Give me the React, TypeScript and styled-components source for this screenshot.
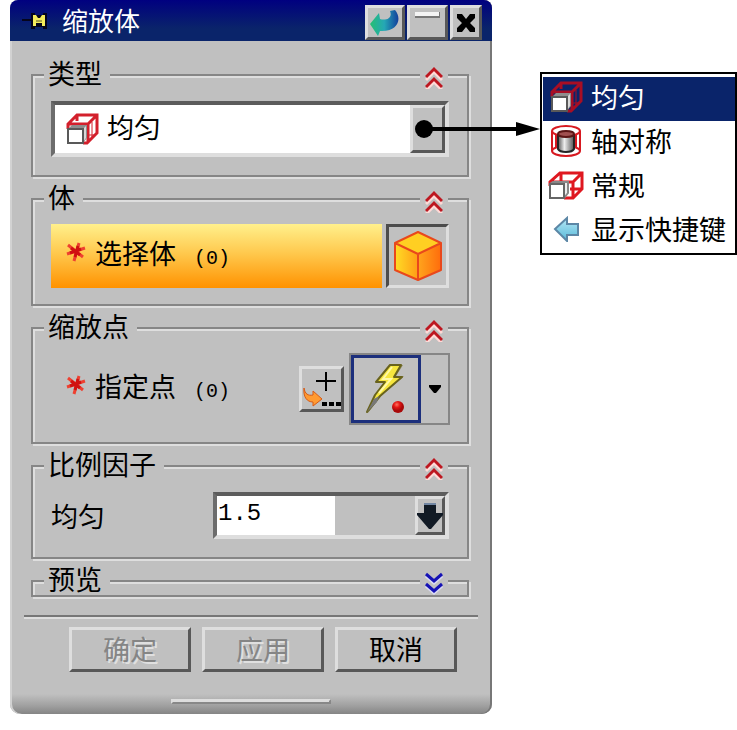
import React from "react";
import styled, { createGlobalStyle, css } from "styled-components";

const FACE = "#c0c0c0";
const LIGHT = "#dedede";
const SHADE = "#868686";
const NAVY = "#0a246a";

const GlobalStyle = createGlobalStyle`
  *, *::before, *::after { box-sizing: border-box; }
  body {
    margin: 0;
    background: #fff;
    color: #000;
    font-family: "Noto Sans CJK SC", sans-serif;
    font-size: 27px;
    line-height: 28px;
  }
  button, input {
    font: inherit;
    color: inherit;
    border-radius: 0;
    padding: 0;
    margin: 0;
  }
  svg { display: block; flex: none; }
`;

const raised = css`
  background: ${FACE};
  border: 3px solid;
  border-color: ${LIGHT} #585858 #585858 ${LIGHT};
`;

const Page = styled.main`
  display: flex;
  align-items: flex-start;
  gap: 48px;
  padding-left: 10px;
`;

const Dialog = styled.form`
  flex: 1 1 0;
  min-width: 420px;
  background: linear-gradient(to top, #858585 0, #a2a2a2 9px, ${FACE} 20px);
  border-radius: 8px 8px 10px 10px;
  box-shadow: inset 2px 0 0 #d2d2d2, inset -2px 0 0 #777;
`;

const TitleBar = styled.header`
  display: flex;
  align-items: center;
  height: 41px;
  padding: 0 10px 0 12px;
  border-radius: 8px 8px 0 0;
  background: linear-gradient(#000080, ${NAVY} 70%);
  color: #fff;
`;

const Title = styled.h1`
  flex: 1;
  margin: 0 0 2px 14px;
  font-size: 26px;
  font-weight: 400;
`;

const WindowButtons = styled.div`
  display: flex;
  gap: 2px;
  padding-top: 4px;
`;

const WindowButton = styled.button<{ $width: number }>`
  ${raised}
  display: flex;
  align-items: center;
  justify-content: center;
  width: ${(p) => p.$width}px;
  height: 35px;
`;

const Groups = styled.div`
  display: flex;
  flex-direction: column;
  gap: 8px;
  padding: 20px 23px 18px 21px;
`;

const GroupBox = styled.fieldset<{ $pad: string }>`
  position: relative;
  min-width: 0;
  margin: 0;
  padding: ${(p) => p.$pad};
  border: 2px solid ${SHADE};
  box-shadow: 2px 2px 0 ${LIGHT}, inset 2px 2px 0 ${LIGHT};
`;

const Legend = styled.legend`
  height: 28px;
  margin-left: -7px;
  padding: 0 8px 0 4px;
  background: ${FACE};
  line-height: 24px;
`;

const Toggle = styled.button`
  position: absolute;
  top: -23px;
  right: 19px;
  display: flex;
  justify-content: center;
  width: 28px;
  height: 23px;
  border: 0;
  background: ${FACE};
`;

const Row = styled.div`
  display: flex;
  align-items: center;
`;

const Field = styled.div<{ $height: number }>`
  display: flex;
  flex: 1;
  align-items: stretch;
  min-width: 0;
  height: ${(p) => p.$height}px;
  border: 4px solid;
  border-color: #5c5c5c ${LIGHT} ${LIGHT} #6c6c6c;
  background: #fff;
`;

const TypeIcon = styled.span`
  display: flex;
  align-items: center;
  padding: 0 8px 0 11px;
`;

const TypeInput = styled.input`
  flex: 1;
  min-width: 0;
  height: 42px;
  border: 0;
  background: transparent;
  outline: none;
`;

const DropButton = styled.button`
  ${raised}
  position: relative;
  width: 35px;
`;

const Connector = styled.svg`
  position: absolute;
  z-index: 2;
  top: 9px;
  left: 0;
  overflow: visible;
`;

const SelectBar = styled.div`
  display: flex;
  flex: 1;
  align-items: center;
  height: 64px;
  background: linear-gradient(#fff08c, #ffc94e 45%, #ff9200);
`;

const PromptBox = styled.div`
  display: flex;
  align-items: center;
  flex: 1;
  gap: 9px;
  padding-left: 15px;
`;

const MarkSlot = styled.span`
  padding-bottom: 8px;
`;

const Count = styled.span`
  margin-left: 18px;
  font-family: "Liberation Mono", monospace;
  font-size: 20px;
`;

const BodyButton = styled.button`
  display: flex;
  align-items: center;
  justify-content: center;
  width: 63px;
  height: 64px;
  margin-left: 4px;
  background: ${FACE};
  border: 3px solid;
  border-color: #4c4c4c ${LIGHT} ${LIGHT} #4c4c4c;
`;

const PointDialogButton = styled.button`
  ${raised}
  display: flex;
  width: 45px;
  height: 46px;
  margin-right: 5px;
`;

const SplitButton = styled.div`
  display: flex;
  height: 72px;
  border: 2px solid ${SHADE};
`;

const PointButton = styled.button`
  width: 70px;
  border: 3px solid #1c2f7c;
  background: ${FACE};
  display: flex;
  align-items: center;
  justify-content: center;
`;

const PointMenuButton = styled.button`
  width: 27px;
  border: 0;
  background: ${FACE};
  display: flex;
  align-items: center;
  justify-content: center;
`;

const FactorLabel = styled.label`
  width: 162px;
  line-height: 40px;
`;

const FactorField = styled(Field)`
  background: ${FACE};
`;

const FactorInput = styled.input`
  width: 118px;
  height: 39px;
  padding: 0 0 4px 1px;
  border: 0;
  background: #fff;
  font-family: "Liberation Mono", monospace;
  font-size: 24px;
  outline: none;
`;

const FactorButton = styled.button`
  ${raised}
  display: flex;
  align-items: center;
  justify-content: center;
  width: 30px;
  margin-left: auto;
`;

const Separator = styled.hr`
  height: 4px;
  margin: 0 14px 8px;
  border: 0;
  border-top: 2px solid #777;
  border-bottom: 2px solid ${LIGHT};
`;

const Actions = styled.div`
  display: flex;
  justify-content: center;
  gap: 11px;
  padding-left: 24px;
`;

const ActionButton = styled.button`
  ${raised}
  width: 122px;
  height: 45px;
  padding-bottom: 2px;

  &:disabled {
    color: #858585;
    text-shadow: 2px 2px 0 #e0e0e0;
  }
`;

const GripArea = styled.div`
  display: flex;
  justify-content: center;
  height: 42px;
  padding-top: 27px;
`;

const Grip = styled.div`
  width: 33%;
  height: 5px;
  border: 2px solid;
  border-color: #ddd #888 #888 #ddd;
  background: #ddd;
`;

const Menu = styled.ul`
  flex: none;
  width: 197px;
  margin: 72px 0 0;
  padding: 3px 0 0 1px;
  list-style: none;
  border: 2px solid #000;
  background: #fff;
`;

const MenuItem = styled.button<{ $active?: boolean }>`
  display: flex;
  align-items: center;
  width: 100%;
  height: 44px;
  padding: 0 0 4px 5px;
  gap: 7px;
  border: 0;
  background: ${(p) => (p.$active ? NAVY : "#fff")};
  color: ${(p) => (p.$active ? "#fff" : "#000")};
  white-space: nowrap;
`;

const IconSlot = styled.span`
  display: flex;
  flex: none;
  align-items: center;
  justify-content: center;
  width: 36px;
`;

const Pin = () => (
  <svg width="26" height="20" viewBox="0 0 26 20" aria-hidden="true">
    <path d="M0 9h9" stroke="#05051c" strokeWidth="2" />
    <path d="M9 2h4v2h8V2h4v16h-4v-2h-8v2H9z" fill="#05051c" />
    <path d="M11 4h3l2 3h2l2-3h3v11h-3v-3h-6v3h-3z" fill="#f4ec5c" />
    <path d="M14 9h6v2h-6z" fill="#a5a044" />
  </svg>
);

const ResetIcon = () => (
  <svg width="32" height="28" viewBox="0 0 32 28" aria-hidden="true">
    <defs>
      <linearGradient id="reset" x1="0" x2="1">
        <stop offset="0" stopColor="#26bf72" />
        <stop offset=".5" stopColor="#25a8b5" />
        <stop offset="1" stopColor="#123f9c" />
      </linearGradient>
    </defs>
    <path d="M1 15 10 4l1 6c6 2 13-1 10-8l5-1c7 8 4 22-15 21l-2 5z" fill="url(#reset)" />
  </svg>
);

const MinimizeIcon = () => (
  <svg width="30" height="28" viewBox="0 0 30 28" aria-hidden="true">
    <path d="M2 3h25v6H2z" fill="#777" />
    <path d="M2 3h24v4H2z" fill="#f4f4f4" />
  </svg>
);

const CloseIcon = () => (
  <svg width="22" height="22" viewBox="0 0 22 22" aria-hidden="true">
    <path d="M2 2h5l4 5 4-5h5v4l-5 5 5 5v4h-5l-4-5-4 5H2v-4l5-5-5-5z" />
  </svg>
);

const Chevrons = ({ down }: { down?: boolean }) => (
  <svg width="18" height="23" viewBox="0 0 18 23" fill="none" aria-hidden="true">
    {down ? (
      <>
        <path d="m1 4 8 7 8-7M1 14l8 7 8-7" stroke="#d9d9f2" strokeWidth="3" />
        <path d="m1 2 8 7 8-7M1 12l8 7 8-7" stroke="#1512b5" strokeWidth="3" />
      </>
    ) : (
      <>
        <path d="m1 14 8-8 8 8M1 24l8-8 8 8" stroke="#ffd9d6" strokeWidth="3" />
        <path d="m1 11 8-8 8 8M1 21l8-8 8 8" stroke="#bd1720" strokeWidth="3" />
      </>
    )}
  </svg>
);

const UniformIcon = ({ dark }: { dark?: boolean }) => {
  const red = dark ? "#a80e24" : "#d3202c";
  return (
    <svg width="33" height="32" viewBox="0 0 33 32" aria-hidden="true">
      <path d="M2 16v-5L11 2h20v18L21 30h-4M2 11h20v18M22 11l9-9M11 2v6" fill="none" stroke={red} strokeWidth="3" />
      <path d="M26 9v16M22 22h6" fill="none" stroke={red} strokeWidth="1" />
      <path d="m2 16 4-4h15v13l-4 5z" fill="#8e8e8e" />
      <path d="m17 16 3-3v12l-3 4z" fill="#d8d8d8" />
      <path d="M2 16h15v14H2z" fill="#fff" stroke="#595959" strokeWidth="2" />
    </svg>
  );
};

const AxisIcon = () => (
  <svg width="33" height="34" viewBox="0 0 33 34" aria-hidden="true">
    <defs>
      <linearGradient id="drum" x1="0" x2="1">
        <stop offset="0" stopColor="#555" />
        <stop offset=".4" stopColor="#eee" />
        <stop offset="1" stopColor="#555" />
      </linearGradient>
    </defs>
    <ellipse cx="16" cy="7" rx="14" ry="5" fill="none" stroke="#d71920" strokeWidth="2" />
    <ellipse cx="16" cy="27" rx="14" ry="5" fill="none" stroke="#d71920" strokeWidth="2" />
    <path d="M2 7v20M30 7v20M6 10v14M26 10v14" stroke="#d71920" strokeWidth="2" />
    <path d="M8 11v14c2 4 14 4 16 0V11z" fill="url(#drum)" stroke="#252525" strokeWidth="2" />
    <ellipse cx="16" cy="10" rx="8" ry="3" fill="#a05050" stroke="#5b1515" strokeWidth="2" />
  </svg>
);

const GeneralIcon = () => (
  <svg width="36" height="29" viewBox="0 0 36 29" fill="none" aria-hidden="true">
    <path d="M2 15v-4L12 2h22v16l-9 9h-9M2 11h23v16M25 11l9-9M13 2v8M22 18h12" stroke="#df1820" strokeWidth="3" />
    <path d="m2 13 3-2h15v11l-4 5" fill="#eee" stroke="#888" strokeWidth="2" />
    <path d="M2 13h14v14H2z" fill="#fff" stroke="#666" strokeWidth="2" />
  </svg>
);

const ArrowLeftIcon = () => (
  <svg width="27" height="26" viewBox="0 0 27 26" aria-hidden="true">
    <defs>
      <linearGradient id="left" x1="0" y1="0" x2="0" y2="1">
        <stop offset="0" stopColor="#b6e7f5" />
        <stop offset="1" stopColor="#56b9d9" />
      </linearGradient>
    </defs>
    <path d="M2 13 14 2v6h11v11H14v6z" fill="url(#left)" stroke="#5c87a6" strokeWidth="2" />
  </svg>
);

const RequiredMark = () => (
  <svg width="20" height="20" viewBox="0 0 20 20" role="img" aria-label="必填">
    <path d="m13 1-5 18M2 3l15 12M1 12l18-6" stroke="#ee4030" strokeWidth="3" />
    <path d="m12 4-3 11M5 6l9 7M4 11l11-4" stroke="#d01010" strokeWidth="3" />
  </svg>
);

const CubeIcon = () => (
  <svg width="50" height="52" viewBox="0 0 50 52" aria-hidden="true">
    <defs>
      <linearGradient id="side" x1="0" x2="1">
        <stop offset="0" stopColor="#ffdc25" />
        <stop offset="1" stopColor="#ff9d16" />
      </linearGradient>
      <linearGradient id="front" x1="0" x2="1">
        <stop offset="0" stopColor="#ffa51d" />
        <stop offset="1" stopColor="#ff6c0c" />
      </linearGradient>
    </defs>
    <path d="M25 2 48 13 25 24 2 13z" fill="#ffcf22" />
    <path d="m2 13 23 11v26L2 40z" fill="url(#side)" />
    <path d="m25 24 23-11v27L25 50z" fill="url(#front)" />
    <path d="M25 2 48 13v27L25 50 2 40V13zM2 13l23 11 23-11M25 24v26" fill="none" stroke="#e9481c" strokeWidth="2" strokeLinejoin="round" />
  </svg>
);

const PointDialogIcon = () => (
  <svg width="39" height="40" viewBox="0 0 39 40" aria-hidden="true">
    <path d="M24 3v19M14 12h20" stroke="#000" strokeWidth="2" />
    <path d="M2 19c1 6 4 8 9 7v-4l9 8-9 7v-4C5 33 1 28 2 19z" fill="#ff9a31" stroke="#d65a16" strokeWidth="1" />
    <path d="M20 33h5v4h-5zM27 33h5v4h-5zM34 33h5v4h-5z" />
  </svg>
);

const LightningIcon = () => (
  <svg width="44" height="52" viewBox="0 0 44 52" aria-hidden="true">
    <defs>
      <radialGradient id="dot" cx=".4" cy=".3">
        <stop offset="0" stopColor="#ff735e" />
        <stop offset=".5" stopColor="#e31616" />
        <stop offset="1" stopColor="#a80909" />
      </radialGradient>
    </defs>
    <path d="M27 2h12l-7 11h8L17 33 4 50l8-18 9-12h-8z" fill="#8d8a60" />
    <path d="M26 2h11l-7 12h8L16 33 3 49l8-17 10-13h-9z" fill="#f6e63e" stroke="#69631d" strokeWidth="2" strokeLinejoin="round" />
    <path d="m28 4-9 12h8L15 30" fill="none" stroke="#fff9a4" strokeWidth="2" />
    <path d="m15 33-5 3-7 13 10-10z" fill="#777" />
    <circle cx="34" cy="44" r="6" fill="url(#dot)" />
  </svg>
);

const CaretIcon = () => (
  <svg width="12" height="8" viewBox="0 0 12 8" aria-hidden="true">
    <path d="M0 0h12v2L7 8H5L0 2z" />
  </svg>
);

const DownIcon = () => (
  <svg width="26" height="28" viewBox="0 0 26 28" aria-hidden="true">
    <path d="M7 2h12v9h7v2L14 27h-2L0 13v-2h7z" fill="#111a25" />
    <path d="M7 1h12v2H7z" fill="#7186a3" />
  </svg>
);

type GroupProps = {
  title: string;
  pad: string;
  collapsed?: boolean;
  children?: React.ReactNode;
};

const Group = ({ title, pad, collapsed, children }: GroupProps) => (
  <GroupBox $pad={pad}>
    <Legend>{title}</Legend>
    <Toggle type="button" aria-label={title} aria-expanded={!collapsed}>
      <Chevrons down={collapsed} />
    </Toggle>
    {children}
  </GroupBox>
);

const Prompt = ({ text }: { text: string }) => (
  <PromptBox>
    <MarkSlot><RequiredMark /></MarkSlot>
    <span>
      {text}
      <Count>(0)</Count>
    </span>
  </PromptBox>
);

const menuItems = [
  { label: "均匀", icon: <UniformIcon dark />, active: true },
  { label: "轴对称", icon: <AxisIcon /> },
  { label: "常规", icon: <GeneralIcon /> },
  { label: "显示快捷键", icon: <ArrowLeftIcon /> },
];

export default function App() {
  return (
    <>
      <GlobalStyle />
      <Page>
        <Dialog onSubmit={(e) => e.preventDefault()}>
          <TitleBar>
            <Pin />
            <Title>缩放体</Title>
            <WindowButtons>
              <WindowButton type="button" $width={40} aria-label="重置"><ResetIcon /></WindowButton>
              <WindowButton type="button" $width={41} aria-label="最小化"><MinimizeIcon /></WindowButton>
              <WindowButton type="button" $width={32} aria-label="关闭"><CloseIcon /></WindowButton>
            </WindowButtons>
          </TitleBar>

          <Groups>
            <Group title="类型" pad="12px 18px 18px">
              <Row>
                <Field $height={56}>
                  <TypeIcon><UniformIcon /></TypeIcon>
                  <TypeInput aria-label="类型" defaultValue="均匀" readOnly />
                  <DropButton type="button" aria-label="打开类型列表">
                    <Connector width="130" height="24" viewBox="0 0 130 24" aria-hidden="true">
                      <path d="M12 12h96" stroke="#000" strokeWidth="4" />
                      <circle cx="11" cy="12" r="9" />
                      <path d="m103 5 24 7-24 7z" />
                    </Connector>
                  </DropButton>
                </Field>
              </Row>
            </Group>

            <Group title="体" pad="11px 18px 16px">
              <Row>
                <SelectBar><Prompt text="选择体" /></SelectBar>
                <BodyButton type="button" aria-label="选择体"><CubeIcon /></BodyButton>
              </Row>
            </Group>

            <Group title="缩放点" pad="11px 17px 17px 18px">
              <Row>
                <Prompt text="指定点" />
                <PointDialogButton type="button" aria-label="点对话框"><PointDialogIcon /></PointDialogButton>
                <SplitButton>
                  <PointButton type="button" aria-label="自动判断的点"><LightningIcon /></PointButton>
                  <PointMenuButton type="button" aria-label="点类型"><CaretIcon /></PointMenuButton>
                </SplitButton>
              </Row>
            </Group>

            <Group title="比例因子" pad="12px 18px 18px">
              <Row>
                <FactorLabel htmlFor="factor">均匀</FactorLabel>
                <FactorField $height={47}>
                  <FactorInput id="factor" defaultValue="1.5" />
                  <FactorButton type="button" aria-label="因子选项"><DownIcon /></FactorButton>
                </FactorField>
              </Row>
            </Group>

            <Group title="预览" pad="0 18px" collapsed />
          </Groups>

          <Separator />
          <Actions>
            <ActionButton type="button" disabled>确定</ActionButton>
            <ActionButton type="button" disabled>应用</ActionButton>
            <ActionButton type="button">取消</ActionButton>
          </Actions>
          <GripArea><Grip /></GripArea>
        </Dialog>

        <Menu aria-label="类型">
          {menuItems.map((item) => (
            <li key={item.label}>
              <MenuItem type="button" $active={item.active}>
                <IconSlot>{item.icon}</IconSlot>
                {item.label}
              </MenuItem>
            </li>
          ))}
        </Menu>
      </Page>
    </>
  );
}
